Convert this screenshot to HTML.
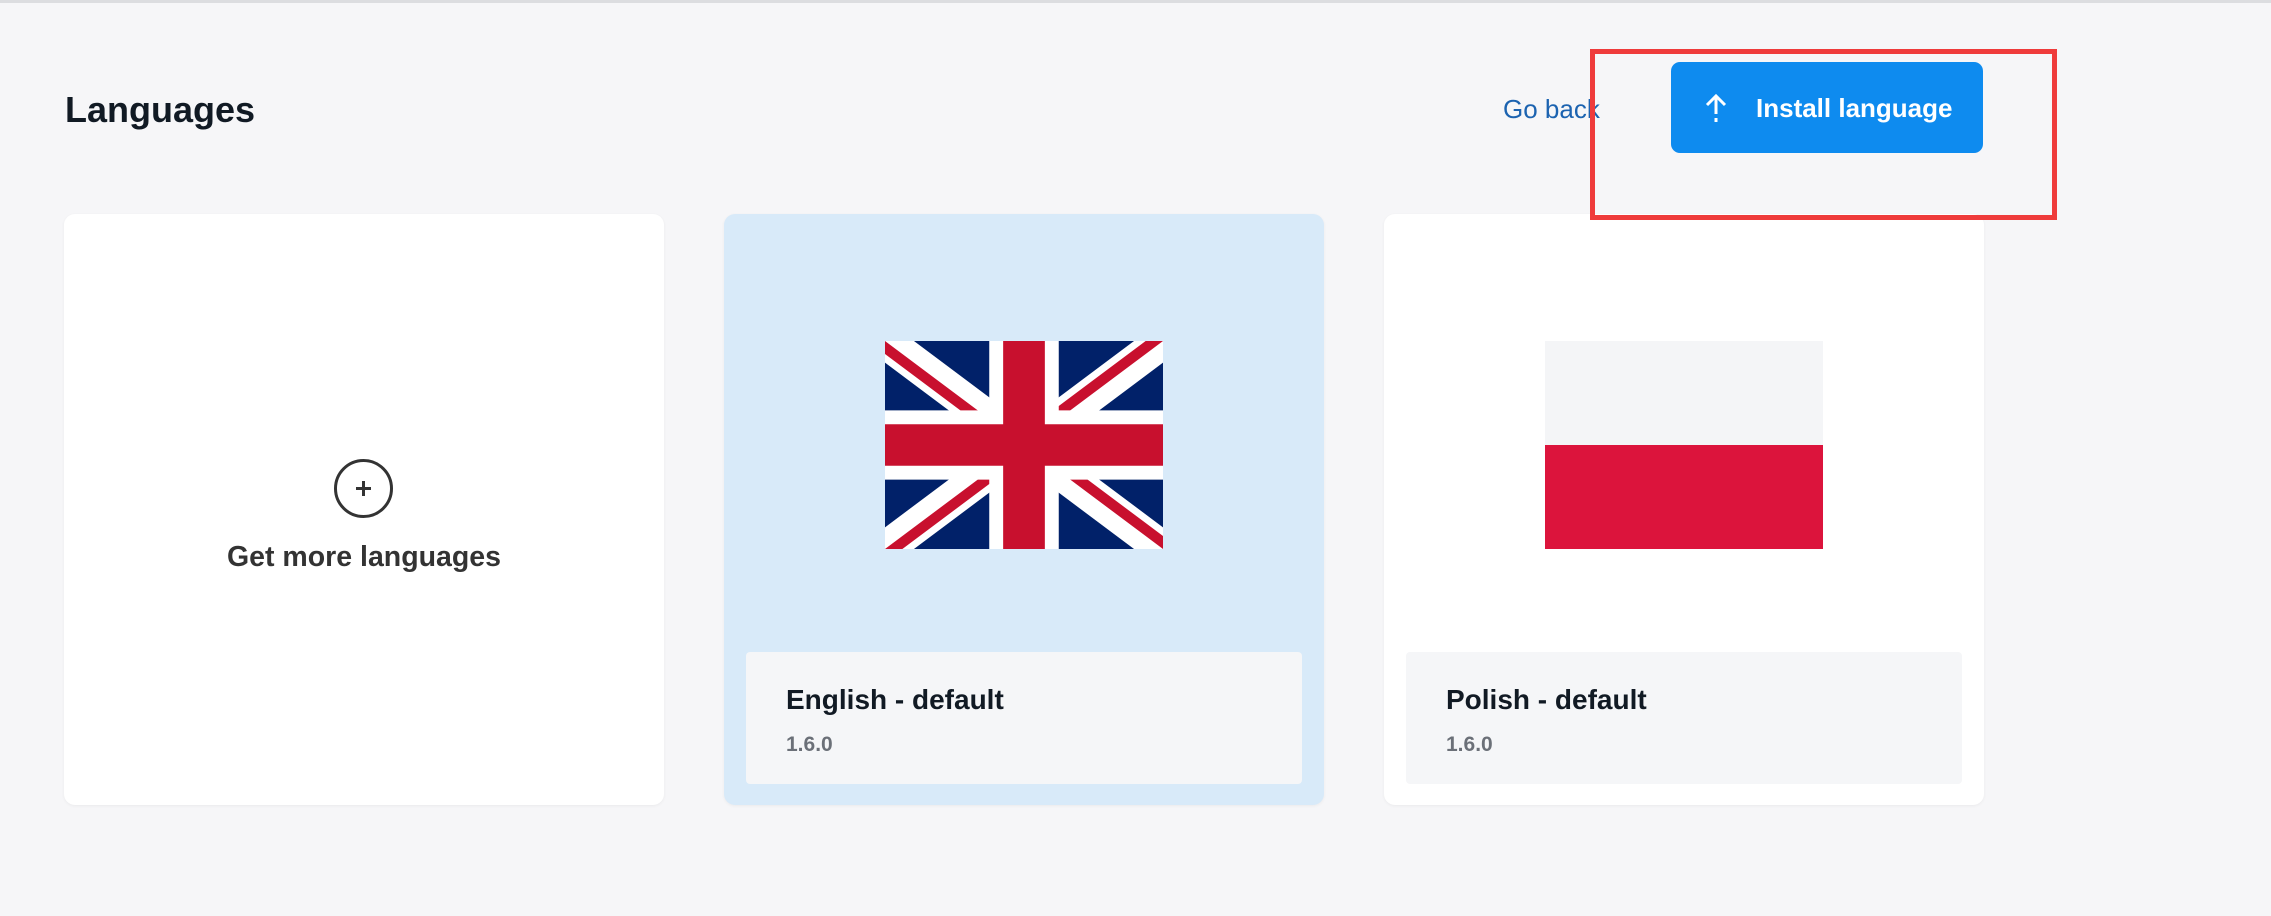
<!DOCTYPE html>
<html><head><meta charset="utf-8"><style>
*{box-sizing:border-box;margin:0;padding:0}
body{width:2271px;height:916px;background:#f6f6f8;font-family:"Liberation Sans",sans-serif;position:relative;overflow:hidden}
.top{position:absolute;left:0;top:0;width:100%;height:3px;background:#dcdde0}
.title{position:absolute;left:65px;top:89px;font-size:36px;font-weight:600;color:#111a24}
.goback{position:absolute;left:1503px;top:94px;font-size:26px;color:#1c63b0}
.btn{position:absolute;left:1671px;top:62px;width:312px;height:91px;background:#0e8bef;border-radius:9px;color:#fff;font-size:26px;font-weight:700}
.btn span{position:absolute;left:85px;top:31px}
.btn svg{position:absolute;left:30px;top:30px}
.red{position:absolute;left:1590px;top:49px;width:467px;height:171px;border:5px solid #ef3b3b;z-index:5}
.card{position:absolute;top:214px;height:591px;width:600px;background:#fff;border-radius:11px;box-shadow:0 1px 3px rgba(0,0,0,.05)}
.c1{left:64px}.c2{left:724px;background:#d8eaf9}.c3{left:1384px}
.foot{position:absolute;left:22px;top:438px;width:556px;height:132px;background:#f5f6f8;border-radius:4px}
.foot .n{position:absolute;left:40px;top:32px;font-size:28px;font-weight:600;color:#111a24}
.foot .v{position:absolute;left:40px;top:81px;font-size:21px;font-weight:600;color:#6b7078}
.flag{position:absolute;left:161px;top:127px;width:278px;height:208px}
.plus{position:absolute;left:270px;top:245px;width:59px;height:59px;border:3px solid #333;border-radius:50%}
.gml{position:absolute;left:0;width:600px;text-align:center;top:327px;font-size:28.5px;font-weight:600;color:#333}
</style></head><body>
<div class="top"></div>
<div class="title">Languages</div>
<div class="goback">Go back</div>
<div class="btn"><svg width="30" height="32" viewBox="0 0 30 32"><path d="M15 4V22M6 13L15 4L24 13" stroke="#fff" stroke-width="3" fill="none"/><rect x="13.5" y="26" width="3" height="4" fill="#fff"/></svg><span>Install language</span></div>
<div class="red"></div>
<div class="card c1">
<div class="plus"><svg width="53" height="53" viewBox="0 0 53 53"><path d="M26.5 19V34M19 26.5H34" stroke="#333" stroke-width="3"/></svg></div>
<div class="gml">Get more languages</div>
</div>
<div class="card c2">
<svg class="flag" viewBox="0 0 40 30" preserveAspectRatio="none"><clipPath id="s"><path d="M0,0v30h40v-30z"/></clipPath><clipPath id="t"><path d="M20,15h20v15zv15h-20zh-20v-15zv-15h20z"/></clipPath><g clip-path="url(#s)"><path d="M0,0v30h40v-30z" fill="#012169"/><path d="M0,0L40,30M40,0L0,30" stroke="#fff" stroke-width="5"/><path d="M0,0L40,30M40,0L0,30" clip-path="url(#t)" stroke="#C8102E" stroke-width="3"/><path d="M20,0v30M0,15h40" stroke="#fff" stroke-width="10"/><path d="M20,0v30M0,15h40" stroke="#C8102E" stroke-width="6"/></g></svg>
<div class="foot"><div class="n">English - default</div><div class="v">1.6.0</div></div>
</div>
<div class="card c3">
<div class="flag" style="background:#f4f5f7"><div style="position:absolute;left:0;top:104px;width:278px;height:104px;background:#dc143c"></div></div>
<div class="foot"><div class="n">Polish - default</div><div class="v">1.6.0</div></div>
</div>
</body></html>
